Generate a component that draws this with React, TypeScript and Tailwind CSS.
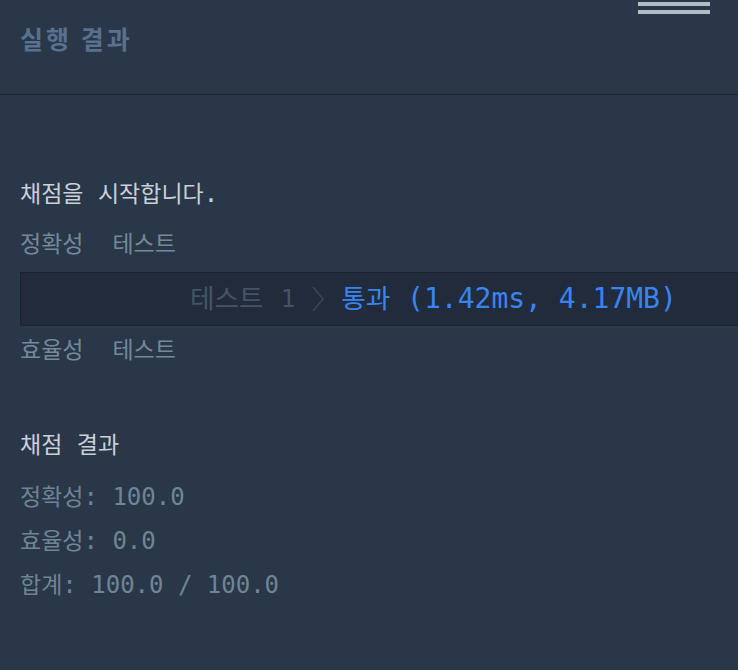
const mono = "font-['DejaVu_Sans_Mono','Noto_Sans_CJK_KR',monospace]";

function K({ children, big }: { children: React.ReactNode; big?: boolean }) {
  return <span className={big ? "text-[26.7px]" : "text-[23px]"}>{children}</span>;
}

function Chevron() {
  return (
    <svg width="12" height="26" viewBox="0 0 12 26" className="shrink-0">
      <polyline points="1,1 11,13 1,25" fill="none" stroke="#3a4658" strokeWidth="1.6" />
    </svg>
  );
}

export default function App() {
  return (
    <div className="min-h-screen w-full overflow-hidden bg-[#293748]">
      <header className="relative h-[95px] border-b border-[#1c2431] px-5 pt-[22px]">
        <h2 className="font-['Noto_Sans_CJK_KR',sans-serif] text-[25px] font-bold leading-[32px] tracking-[3px] text-[#58718e]">
          실행 결과
        </h2>
        <div className="absolute right-[28px] top-[2px] flex w-[72px] flex-col gap-[4px]">
          <span className="h-[4px] bg-[#b1bdc4]" />
          <span className="h-[4px] bg-[#b1bdc4]" />
        </div>
      </header>

      <main className={`${mono} px-5 pt-[77px] text-[24px] whitespace-pre`}>
        <p className="h-[44px] leading-[44px] text-[#c9d0d8]">
          <K>채점을</K> <K>시작합니다</K>.
        </p>
        <p className="h-[56px] leading-[56px] text-[#74899a]">
          <K>정확성</K>  <K>테스트</K>
        </p>

        <div className="-mr-10 flex h-[54px] items-center border border-[#1b2330] bg-[#212b3c] pl-[169px] text-[28px]">
          <span className="text-[#465467]">
            <K big>테스트</K>
          </span>
          <span className="ml-[17px] text-[24px] text-[#465467]">1</span>
          <span className="ml-[17px] mr-[17px] flex items-center">
            <Chevron />
          </span>
          <span className="text-[#3a84f2]">
            <K big>통과</K> (1.42ms, 4.17MB)
          </span>
        </div>

        <p className="h-[48px] leading-[48px] text-[#74899a]">
          <K>효율성</K>  <K>테스트</K>
        </p>

        <p className="mt-[49px] h-[44px] leading-[44px] text-[#c9d0d8]">
          <K>채점</K> <K>결과</K>
        </p>
        <p className="mt-[8px] h-[44px] leading-[44px] text-[#6f8596]">
          <K>정확성</K>: 100.0
        </p>
        <p className="h-[44px] leading-[44px] text-[#6f8596]">
          <K>효율성</K>: 0.0
        </p>
        <p className="h-[44px] leading-[44px] text-[#6f8596]">
          <K>합계</K>: 100.0 / 100.0
        </p>
      </main>
    </div>
  );
}
